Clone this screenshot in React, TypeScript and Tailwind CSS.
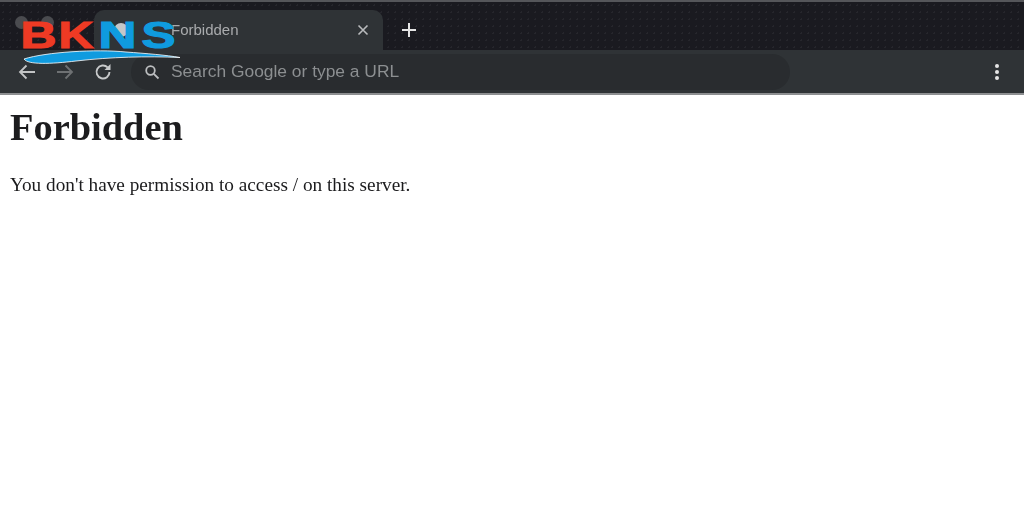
const Logo = () => (
  <svg className="absolute left-[16px] top-[16px] overflow-visible" width="170" height="52" viewBox="0 0 170 52">
    <g fontFamily="'Liberation Sans', Arial, sans-serif" fontWeight="700" fontSize="36" strokeWidth="1.100">
      <text x="4.500" y="31.500" fill="#ee3a24" stroke="#ee3a24" textLength="36" lengthAdjust="spacingAndGlyphs">B</text>
      <text x="42.500" y="31.500" fill="#ee3a24" stroke="#ee3a24" textLength="35" lengthAdjust="spacingAndGlyphs">K</text>
      <text x="82.500" y="31.500" fill="#0f9bdf" stroke="#0f9bdf" textLength="38" lengthAdjust="spacingAndGlyphs">N</text>
      <text x="125.500" y="31.500" fill="#0f9bdf" stroke="#0f9bdf" textLength="34" lengthAdjust="spacingAndGlyphs">S</text>
    </g>
    <path d="M8 43C30 36 80 33 110 36C130 37.500 150 39 164 41.500C130 40 95 41 60 45C35 48 12 49 8 43Z" fill="#0f9bdf" stroke="#ffffff" strokeWidth="0.8" />
  </svg>
);

const TabBar = () => (
  <div className="flex h-[50px] border-t-2 border-[#55565a] bg-[#1a1a20] bg-[radial-gradient(#26262c_1px,transparent_1px)] bg-[length:7px_7px]">
    {/* Fenster-knappar */}
    <div className="flex w-[94px] shrink-0 gap-[13px] pl-[15px] pt-[14px]">
      <span className="h-[13px] w-[13px] rounded-full bg-[#4a4b4f]" />
      <span className="h-[13px] w-[13px] rounded-full bg-[#4a4b4f]" />
    </div>
    <div className="mt-[8px] flex h-[40px] w-[289px] items-center rounded-t-[10px] bg-[#2f3336] pl-[20px] pr-[14px]">
      <span className="h-[14px] w-[14px] rounded-full bg-[#c4c6c8]" />
      <span className="ml-[43px] flex-1 text-[15px] text-[#a9abad]">Forbidden</span>
      <svg width="12" height="12" viewBox="0 0 12 12" fill="none" stroke="#b9bbbd" strokeWidth="1.6">
        <path d="M1.500 1.500L10.500 10.500M10.500 1.500L1.500 10.500" />
      </svg>
    </div>
    <div className="ml-[19px] mt-[20px] flex h-[16px] w-[14px] items-center justify-center">
      <svg width="14" height="14" viewBox="0 0 14 14" fill="none" stroke="#e4e4e4" strokeWidth="2">
        <path d="M7 0V14M0 7H14" />
      </svg>
    </div>
  </div>
);

const Toolbar = () => (
  <div className="flex h-[45px] items-center border-b-2 border-[#8d8f91] bg-[#2f3336]">
    <div className="flex w-[131px] shrink-0 items-center gap-[20px] pl-[18px]">
      <svg width="18" height="16" viewBox="0 0 18 16" fill="none" stroke="#c2c4c5" strokeWidth="1.800">
        <path d="M17 8H2M8.500 1.500L2 8L8.500 14.500" />
      </svg>
      <svg width="18" height="16" viewBox="0 0 18 16" fill="none" stroke="#6e7173" strokeWidth="1.800">
        <path d="M1 8H16M9.500 1.500L16 8L9.500 14.500" />
      </svg>
      <svg width="18" height="18" viewBox="0 0 18 18" fill="none" stroke="#c8cacb" strokeWidth="1.900">
        <path d="M15.500 9A6.500 6.500 0 1 1 13.600 4.400" />
        <path d="M16.500 1V7H10.500Z" fill="#c8cacb" stroke="none" />
      </svg>
    </div>
    <div className="flex h-[36px] w-[659px] items-center rounded-full bg-[#292c2f] pl-[13px]">
      <svg width="16" height="16" viewBox="0 0 16 16" fill="none" stroke="#bcbec0" strokeWidth="1.800">
        <circle cx="6.500" cy="6.500" r="4.300" />
        <path d="M9.800 9.800L14.500 14.500" />
      </svg>
      <span className="ml-[11px] text-[17.400px] text-[#8c8f91]">Search Google or type a URL</span>
    </div>
    <div className="ml-auto mr-[25px] flex flex-col gap-[2px]">
      <span className="h-[4px] w-[4px] rounded-full bg-[#e6e6e6]" />
      <span className="h-[4px] w-[4px] rounded-full bg-[#e6e6e6]" />
      <span className="h-[4px] w-[4px] rounded-full bg-[#e6e6e6]" />
    </div>
  </div>
);

export default function App() {
  return (
    <div className="relative h-[508px] w-[1024px] overflow-hidden bg-white font-['Liberation_Serif',serif]">
      <div className="font-['Liberation_Sans',Arial,sans-serif] blur-[0.6px]">
        <TabBar />
        <Toolbar />
      </div>
      <div className="px-[10px] text-[#1c1c1e] blur-[0.4px]">
        <h1 className="mt-[10px] text-[38.400px] font-bold leading-[44px]">Forbidden</h1>
        <p className="mt-[25px] text-[19.250px] leading-[22px]">You don't have permission to access / on this server.</p>
      </div>
      <Logo />
    </div>
  );
}
